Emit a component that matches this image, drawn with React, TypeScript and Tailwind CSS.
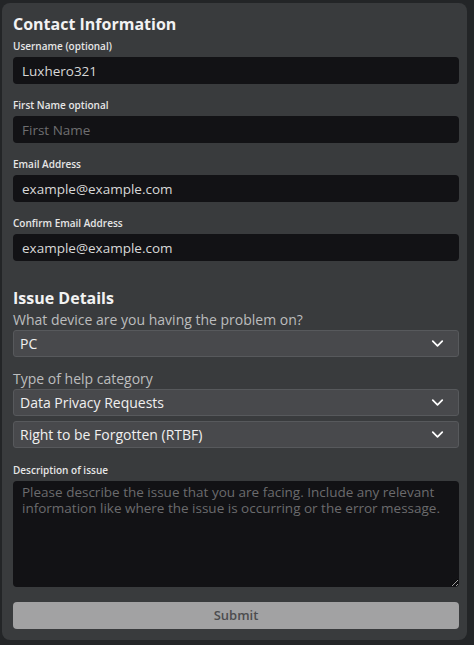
import { ChevronDown } from 'lucide-react'

const font = { fontFamily: '"Open Sans", "Liberation Sans", sans-serif' }

function Field({ label, value, placeholder }: { label: string; value?: string; placeholder?: string }) {
  return (
    <div className="flex flex-col">
      <label className="text-[10px] font-semibold leading-[14px] text-[#e6e6e6] mb-[4px]">{label}</label>
      <input
        readOnly
        defaultValue={value}
        placeholder={placeholder}
        className="h-[27px] w-full rounded-[4px] bg-[#121215] px-[9px] text-[13.5px] text-[#d8d8d8] placeholder:text-[#6e6e70] outline-none"
      />
    </div>
  )
}

function Select({ value }: { value: string }) {
  return (
    <div className="flex h-[27px] items-center justify-between rounded-[3px] border border-[#57595c] bg-[#48494c] pl-[6px] pr-[11px]">
      <span className="text-[14px] text-[#f0f0f0]">{value}</span>
      <ChevronDown className="h-[19px] w-[19px] text-white" strokeWidth={2.2} />
    </div>
  )
}

export default function App() {
  return (
    <div className="min-h-[645px] bg-[#232527] pt-[3px] pl-[2px] pr-[7px] pb-[5px]" style={font}>
      <div className="rounded-[8px] bg-[#393b3d] pl-[11px] pr-[8px] pt-[10px] pb-[11px]">
        <h2 className="text-[16px] font-bold leading-[22px] text-[#f2f2f2] mb-[4px]">Contact Information</h2>
        <div className="flex flex-col gap-[14px]">
          <Field label="Username (optional)" value="Luxhero321" />
          <Field label="First Name optional" placeholder="First Name" />
          <Field label="Email Address" value="example@example.com" />
          <Field label="Confirm Email Address" value="example@example.com" />
        </div>

        <h2 className="mt-[26px] text-[16px] font-bold leading-[22px] text-[#f2f2f2]">Issue Details</h2>
        <p className="mt-[2px] mb-[1px] text-[14px] leading-[18px] text-[#bcbdbe]">What device are you having the problem on?</p>
        <Select value="PC" />

        <p className="mt-[13px] mb-[1px] text-[14px] leading-[18px] text-[#bcbdbe]">Type of help category</p>
        <div className="flex flex-col gap-[5px]">
          <Select value="Data Privacy Requests" />
          <Select value="Right to be Forgotten (RTBF)" />
        </div>

        <label className="mt-[15px] block text-[10px] font-semibold leading-[14px] text-[#e6e6e6] mb-[4px]">Description of issue</label>
        <textarea
          readOnly
          placeholder="Please describe the issue that you are facing. Include any relevant information like where the issue is occurring or the error message."
          className="block h-[106px] w-full resize-y rounded-[4px] bg-[#121215] px-[9px] pt-[3px] text-[13.5px] leading-[16px] text-[#d8d8d8] placeholder:text-[#6b6b6d] outline-none"
        />

        <button className="mt-[15px] h-[27px] w-full rounded-[4px] bg-[#a2a2a3] text-[13px] font-semibold text-[#4d4d4f]">
          Submit
        </button>
      </div>
    </div>
  )
}
